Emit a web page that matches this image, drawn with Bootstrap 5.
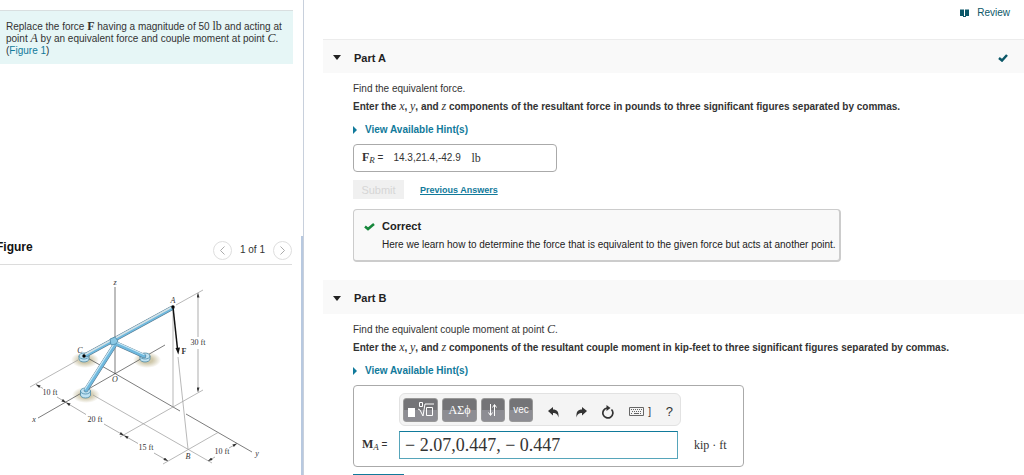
<!DOCTYPE html>
<html lang="en">
<head>
<meta charset="utf-8">
<meta name="viewport" content="width=device-width, initial-scale=1">
<title>Equivalent force and couple moment</title>
<link rel="stylesheet" href="https://cdn.jsdelivr.net/npm/bootstrap@5.3.0/dist/css/bootstrap.min.css">
<style>
  body { font-family: "Liberation Sans", Arial, sans-serif; font-size: 10px; line-height: 12px; color: #333; }
  a { color: #117a9b; text-decoration: none; }
  .tex { font-family: "Liberation Serif", "Times New Roman", serif; font-size: 12px; line-height: 0; font-weight: 400; }
  .tex-b { font-weight: 700; }
  .tex-sub { font-size: 9px; font-style: italic; }
  .side-pane { flex: 0 0 304px; border-right: 1px solid #c8d0dc; }
  .problem-pane { height: 236px; padding: 10px 10px 0 0; }
  .prompt-box { background: #e6f6f6; border-top: 1px solid #d9dfe0; padding: 10px 6px 7px 6px; }
  .figure-pane { border-right: 2px solid #b8c9e0; padding-right: 9px; }
  .figure-bar { border-bottom: 1px solid #dcdcdc; height: 29px; }
  .figure-bar h2 { font-size: 12px; line-height: 22px; font-weight: 700; color: #111; margin: 0 0 0 -4px; }
  .pager-btn { width: 19px; height: 19px; border: 1px solid #dedede; background: #fff; }
  .work-pane { padding-left: 19px; }
  .top-bar { height: 39px; padding: 7px 14px 0 0; }
  .top-bar a, .deep { color: #0b5768; }
  .part-head { background: #f9f9f9; height: 34px; padding: 2px 16px 0 10px; gap: 13px; }
  .part-head.first-part { border-top: 1px solid #ececec; }
  .part-head h2 { font-size: 11px; line-height: 14px; font-weight: 700; color: #222; margin: 0; }
  .part-body { padding: 10px 16px 18px 30px; }
  .ask { margin-bottom: 6px; }
  .rule-text { font-weight: 700; margin-bottom: 11px; }
  .hint-link { font-weight: 700; margin-bottom: 7px; }
  .answer-box { border: 1px solid #aaa; border-radius: 4px; }
  .simple-answer { width: 204px; height: 28px; padding: 0 8px; gap: 2px; }
  .plain-input { width: 76px; border: 0; padding: 0; background: none; color: #333; font-size: 10px; }
  .send-btn { border: 0; width: 51px; height: 19px; font-size: 11px; line-height: 14px; padding: 0; }
  .send-btn:disabled { background: #f0f0f0; color: #d6d6d6; }
  .send-btn.ready { background: #117a9b; color: #fff; }
  .prev-link { font-size: 9px; font-weight: 700; text-decoration: underline; }
  .feedback { max-width: 488px; height: 53px; margin-top: 10px; gap: 6px; background: #f9f9f9; border: 1px solid #ccc; border-right-width: 2px; border-bottom-width: 2px; border-radius: 4px; padding: 9px 0 0 10px; color: #222; }
  .feedback h3 { font-size: 11px; line-height: 14px; font-weight: 700; margin: 0 0 6px; }
  .editor { width: 391px; height: 82px; padding: 7px 8px; margin-bottom: 7px; }
  .tool-strip { width: 282px; height: 33px; background: #f4f4f4; border: 1px solid #e2e2e2; border-radius: 6px; padding: 0 7px 0 3px; }
  .key-btn { height: 24px; border: 1px solid #999; border-radius: 3px; background: linear-gradient(#747477 50%, #8d8d93 50%); color: #fff; padding: 0; line-height: 20px; }
  .key-wide { width: 35px; }
  .key-slim { width: 24px; }
  .icon-btn { border: 0; background: none; padding: 4px 0 0; color: #333; line-height: 14px; }
  .help-btn { font-size: 13px; }
  .math-input { width: 279px; height: 28px; border: 1px solid #56a5ba; border-top-color: #117a9b; padding: 0 5px; font-family: "Liberation Serif", serif; font-size: 18px; color: #333; }
  .editor-row { margin-top: 5px; }
  .editor-label { width: 37px; }
</style>
</head>
<body>
<div class="d-flex vh-100 overflow-hidden">
  <aside class="side-pane d-flex flex-column overflow-hidden">
    <section class="problem-pane flex-shrink-0">
      <div class="prompt-box">Replace the force <span class="tex tex-b">F</span> having a magnitude of 50 <span class="tex">lb</span> and acting at point <i class="tex">A</i> by an equivalent force and couple moment at point <i class="tex">C</i>. (<a href="#figure">Figure 1</a>)</div>
    </section>
    <section class="figure-pane flex-grow-1" id="figure">
      <div class="figure-bar d-flex justify-content-between">
        <h2>Figure</h2>
        <div class="d-flex align-items-center gap-2">
          <button class="pager-btn rounded-circle p-0 d-flex align-items-center justify-content-center" aria-label="Previous figure"><svg width="7" height="9" fill="none" stroke="#aaa"><path d="M5.500.5 1.500 4.500l4 4"/></svg></button>
          <span>1 of 1</span>
          <button class="pager-btn rounded-circle p-0 d-flex align-items-center justify-content-center" aria-label="Next figure"><svg width="7" height="9" fill="none" stroke="#aaa"><path d="m1.500.5 4 4-4 4"/></svg></button>
        </div>
      </div>
      <svg class="d-block w-100" viewBox="0 265 292 210" role="img" aria-label="Pipe assembly with force F at A">
        <defs>
          <marker id="tip" viewBox="0 0 6 4" refX="6" refY="2" markerWidth="5" markerHeight="3" markerUnits="userSpaceOnUse" orient="auto-start-reverse"><path d="M0 0 6 2 0 4z" fill="#333"/></marker>
          <radialGradient id="ground"><stop offset=".4" stop-color="#cfc8ab"/><stop offset="1" stop-color="#cfc8ab" stop-opacity="0"/></radialGradient>
        </defs>
        <g fill="url(#ground)"><ellipse cx="85" cy="360" rx="14" ry="8"/><ellipse cx="86" cy="395" rx="14" ry="8"/><ellipse cx="147" cy="360" rx="14" ry="8"/></g>
        <g fill="none" stroke="#444" stroke-width=".7">
          <path d="M115 287v87M84 356l31 17.500L180 411M186 414l66 38M38 418l127-73"/>
          <g stroke="#999"><path d="M78 360 30 387M93 395l119 68M120 437l83-47M163 464l55-31.500M173 308v99M178 357l10 92M176 305l27-15"/></g>
        </g>
        <g fill="none" stroke="#777" stroke-width=".6">
          <path marker-start="url(#tip)" d="m36 384.500 7 4"/><path marker-end="url(#tip)" d="m57 397 9 5.500"/>
          <path marker-start="url(#tip)" d="m66 402.500 20 12"/><path marker-end="url(#tip)" d="m104 424 20 11.500"/>
          <path marker-start="url(#tip)" d="m124 435.500 14 8"/><path marker-end="url(#tip)" d="m154 453 14 8"/>
          <path marker-start="url(#tip)" d="m208 461 7-4"/><path marker-end="url(#tip)" d="m229 448 8-4.500"/>
          <path marker-start="url(#tip)" d="M198 293v44"/><path marker-end="url(#tip)" d="M198 349v43"/>
        </g>
        <g stroke="#3b7fa0" stroke-width=".7" fill="#bfe2f2">
          <path d="M79 356v3a5 3 0 0 0 10 0v-3z"/><ellipse cx="84" cy="356" rx="5" ry="3"/>
          <path d="M80.500 391v4a5 3 0 0 0 10 0v-4z"/><ellipse cx="85.500" cy="391" rx="5" ry="3"/>
          <path d="M140 356v3a5 3 0 0 0 10 0v-3z"/><ellipse cx="145" cy="356" rx="5" ry="3"/>
        </g>
        <g stroke-linecap="round">
          <path stroke="#56758a" stroke-width="4.500" d="m115 343 29 13M116 343 86 390"/>
          <path stroke="#6fb9de" stroke-width="3.500" d="m115 343 29 13M116 343 86 390"/>
          <path stroke="#cbeaf7" stroke-width="1.200" d="m116 342 28 12.500M114.500 343 85 389"/>
          <path stroke="#56758a" stroke-width="4.500" d="m86 355 86-47"/>
          <path stroke="#6fb9de" stroke-width="3.500" d="m86 355 86-47"/>
          <path stroke="#d5e2e6" stroke-width="1.500" d="m85 354.500 86-47"/>
        </g>
        <path d="m110 339 5-2 3 4-2 3-5 1z" fill="#8ac8e4" stroke="#42809d" stroke-width=".7"/>
        <circle cx="84" cy="356" r="1.700"/><circle cx="173" cy="307" r="1.700"/>
        <path d="m173 307 4.500 42" stroke="#111" stroke-width="1.500"/><path d="m175.500 348 4.500-.5-1.700 7z" fill="#111"/>
        <g font-family="Liberation Serif, serif" font-size="8" fill="#333" text-anchor="middle">
          <g font-style="italic"><text x="115" y="285">z</text><text x="173" y="303">A</text><text x="80" y="353">C</text><text x="115" y="382">O</text><text x="34" y="422">x</text><text x="188" y="459">B</text><text x="257" y="456">y</text></g>
          <text x="184" y="354" font-weight="700">F</text>
          <text x="198" y="345">30 ft</text><text x="50" y="395">10 ft</text><text x="95" y="422">20 ft</text><text x="146" y="450">15 ft</text><text x="222" y="454">10 ft</text>
        </g>
      </svg>
    </section>
  </aside>

  <main class="work-pane flex-grow-1">
    <div class="top-bar d-flex justify-content-end">
      <div><a href="#review" class="d-flex align-items-center gap-2"><svg width="9" height="8" fill="currentColor"><path d="M0 .5h4V7H0zM5 .5h4V7H5zM3 7h3v1H3z"/></svg><span>Review</span></a></div>
    </div>

    <section>
      <div class="part-head first-part d-flex align-items-center">
        <svg width="8" height="5"><path d="M0 0h8L4 5z" fill="#222"/></svg>
        <h2 class="flex-grow-1">Part A</h2>
        <svg class="deep" width="10" height="8" fill="none" stroke="currentColor" stroke-width="2.500"><path d="m1 4 3 2.500L9 1"/></svg>
      </div>
      <div class="part-body">
        <div class="ask">Find the equivalent force.</div>
        <div class="rule-text">Enter the <i class="tex">x</i>, <i class="tex">y</i>, and <i class="tex">z</i> components of the resultant force in pounds to three significant figures separated by commas.</div>
        <div class="hint-link"><a href="#hints-a" class="d-inline-flex align-items-center gap-2"><svg width="4" height="8"><path d="M0 0l4 4-4 4z" fill="currentColor"/></svg><span>View Available Hint(s)</span></a></div>
        <div class="answer-box simple-answer d-flex align-items-center mb-2">
          <label for="force" class="me-2"><span class="tex tex-b">F</span><sub class="tex tex-sub">R</sub> =</label>
          <input id="force" class="plain-input" value="14.3,21.4,-42.9" readonly>
          <span class="tex">lb</span>
        </div>
        <div class="d-flex align-items-center gap-3">
          <button class="send-btn" disabled>Submit</button>
          <a class="prev-link" href="#previous">Previous Answers</a>
        </div>
        <div class="feedback d-flex">
          <svg class="mt-1 flex-shrink-0" width="12" height="9" fill="none" stroke="#16873b" stroke-width="2.500"><path d="m1 3.500 3 2.500 6-5"/></svg>
          <div><h3>Correct</h3><div>Here we learn how to determine the force that is equivalent to the given force but acts at another point.</div></div>
        </div>
      </div>
    </section>

    <section>
      <div class="part-head d-flex align-items-center">
        <svg width="8" height="5"><path d="M0 0h8L4 5z" fill="#222"/></svg>
        <h2>Part B</h2>
      </div>
      <div class="part-body">
        <div class="ask">Find the equivalent couple moment at point <i class="tex">C</i>.</div>
        <div class="rule-text">Enter the <i class="tex">x</i>, <i class="tex">y</i>, and <i class="tex">z</i> components of the resultant couple moment in kip-feet to three significant figures separated by commas.</div>
        <div class="hint-link"><a href="#hints-b" class="d-inline-flex align-items-center gap-2"><svg width="4" height="8"><path d="M0 0l4 4-4 4z" fill="currentColor"/></svg><span>View Available Hint(s)</span></a></div>
        <div class="answer-box editor">
          <div class="d-flex">
            <div class="editor-label"></div>
            <div class="tool-strip d-flex align-items-center justify-content-between">
              <div class="d-flex gap-1">
                <button class="key-btn key-wide" aria-label="Templates"><svg width="29" height="20" fill="none" stroke="#fff"><path d="M2 8h7v9H2z" fill="#fff" stroke="none"/><path d="M13.500 2.500h3v4h-3zM12 9l2 1 3 6 2-12h9M20.500 7.500h6v8h-6z"/></svg></button>
                <button class="key-btn key-wide tex">ΑΣϕ</button>
                <button class="key-btn key-slim" aria-label="Arrows"><svg width="12" height="14" fill="none" stroke="#fff"><path d="M3.500 1v11M1.500 9.500l2 3 2-3M7.500 13V2M5.500 4.500l2-3 2 3"/></svg></button>
                <button class="key-btn key-slim">vec</button>
              </div>
              <button class="icon-btn" aria-label="Undo"><svg width="12" height="12" fill="currentColor"><path d="M0 5 5 1v2.500c4 0 6 2 5.500 8C9.500 8 8 7 5 7v2.500z"/></svg></button>
              <button class="icon-btn" aria-label="Redo"><svg width="12" height="12" fill="currentColor"><path d="M12 5 7 1v2.500c-4 0-6 2-5.500 8C2.500 8 4 7 7 7v2.500z"/></svg></button>
              <button class="icon-btn" aria-label="Reset"><svg width="13" height="14" fill="none" stroke="currentColor" stroke-width="1.700"><path d="M10.500 4.500A5 5 0 1 1 6 3"/><path d="m5.500 0 4 3-4 3z" fill="currentColor" stroke="none"/></svg></button>
              <button class="icon-btn d-flex align-items-center gap-1" aria-label="Keyboard"><svg width="15" height="9" fill="none" stroke="#666"><path d="M.5.5h14v8H.5z"/><path stroke-dasharray="1 1" d="M2 2.500h11M3 4.500h10M2 6.500h2M11 6.500h2"/><path d="M5 6.500h5"/></svg><span>]</span></button>
              <button class="icon-btn help-btn" aria-label="Help">?</button>
            </div>
          </div>
          <div class="editor-row d-flex align-items-center">
            <label for="moment" class="editor-label"><span class="tex tex-b">M</span><sub class="tex tex-sub">A</sub> =</label>
            <input id="moment" class="math-input" value="− 2.07,0.447, − 0.447">
            <span class="tex ms-3">kip · ft</span>
          </div>
        </div>
        <button class="send-btn ready">Submit</button>
      </div>
    </section>
  </main>
</div>
<script src="https://cdn.jsdelivr.net/npm/bootstrap@5.3.0/dist/js/bootstrap.bundle.min.js"></script>
</body>
</html>
